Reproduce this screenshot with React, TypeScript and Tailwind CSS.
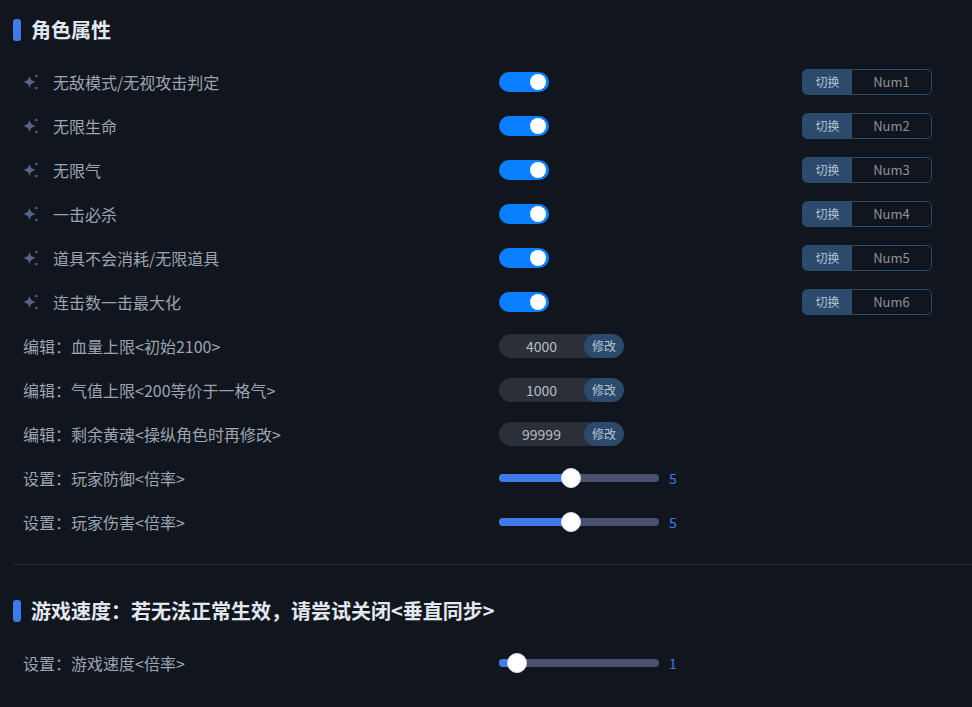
const font = { fontFamily: '"Noto Sans CJK SC", "Liberation Sans", sans-serif' };

const toggles = [
  { label: "无敌模式/无视攻击判定", key: "Num1" },
  { label: "无限生命", key: "Num2" },
  { label: "无限气", key: "Num3" },
  { label: "一击必杀", key: "Num4" },
  { label: "道具不会消耗/无限道具", key: "Num5" },
  { label: "连击数一击最大化", key: "Num6" },
];

const edits = [
  { label: "编辑：血量上限<初始2100>", value: "4000" },
  { label: "编辑：气值上限<200等价于一格气>", value: "1000" },
  { label: "编辑：剩余黄魂<操纵角色时再修改>", value: "99999" },
];

function Sparkle() {
  return (
    <svg width="18" height="18" viewBox="0 0 18 18" className="shrink-0">
      <path d="M7.5 2.6 C8 6.2 9.6 8 13.6 9 C9.6 10 8 11.8 7.5 15.4 C7 11.8 5.4 10 1.4 9 C5.4 8 7 6.2 7.5 2.6 Z" fill="#56648c" />
      <path d="M14.4 0.8 C14.6 2.2 15.2 2.8 16.6 3 C15.2 3.2 14.6 3.8 14.4 5.2 C14.2 3.8 13.6 3.2 12.2 3 C13.6 2.8 14.2 2.2 14.4 0.8 Z" fill="#56648c" />
      <path d="M14.4 12.8 C14.6 14.2 15.2 14.8 16.6 15 C15.2 15.2 14.6 15.8 14.4 17.2 C14.2 15.8 13.6 15.2 12.2 15 C13.6 14.8 14.2 14.2 14.4 12.8 Z" fill="#56648c" />
    </svg>
  );
}

function Heading({ text }: { text: string }) {
  return (
    <div className="flex h-[22px] items-center gap-[10px]">
      <span className="h-[22px] w-2 rounded-[3px] bg-[#3f7ae8]" />
      <h2 className="text-[20px] leading-[22px] font-bold text-[#e3e8f0]">{text}</h2>
    </div>
  );
}

function Slider({ label, value, percent }: { label: string; value: string; percent: number }) {
  return (
    <div className="flex h-11 items-center pl-[10px]">
      <span className="w-[476px] text-[16px] text-[#9ba4b0]">{label}</span>
      <div className="relative h-2 w-40 rounded-full bg-[#4b5070]">
        <div className="h-2 rounded-full bg-[#3f7ae8]" style={{ width: `${percent}%` }} />
        <span
          className="absolute top-1/2 h-5 w-5 -translate-x-1/2 -translate-y-1/2 rounded-full border border-[#dbe5ec] bg-white"
          style={{ left: `${percent}%` }}
        />
      </div>
      <span className="ml-[10px] text-[14px] text-[#3f7ae8]">{value}</span>
    </div>
  );
}

export default function App() {
  return (
    <div className="h-[707px] w-[972px] overflow-hidden bg-[#11161e] pt-[19px] pl-[13px]" style={font}>
      <Heading text="角色属性" />

      <div className="mt-[19px]">
        {toggles.map((item) => (
          <div key={item.key} className="flex h-11 items-center pl-[9px]">
            <Sparkle />
            <span className="ml-[13px] w-[446px] text-[16px] text-[#9ba4b0]">{item.label}</span>
            <div className="relative h-5 w-[50px] rounded-full bg-[#0a7fff]">
              <span className="absolute top-[2px] right-[3px] h-4 w-4 rounded-full bg-white" />
            </div>
            <div className="ml-[253px] flex h-[26px] w-[130px] overflow-hidden rounded-[5px] border border-[#2c4a6b]">
              <span className="flex w-[49px] items-center justify-center bg-[#2c4a6b] text-[12px] text-[#b4c2d2]">切换</span>
              <span className="flex flex-1 items-center justify-center text-[13px] text-[#8b919a]">{item.key}</span>
            </div>
          </div>
        ))}

        {edits.map((item) => (
          <div key={item.value} className="flex h-11 items-center pl-[10px]">
            <span className="w-[476px] text-[16px] text-[#9ba4b0]">{item.label}</span>
            <div className="flex h-6 w-[125px] overflow-hidden rounded-full bg-[#2b3038]">
              <span className="flex w-[85px] items-center justify-center text-[14px] text-[#b9bdc3]">{item.value}</span>
              <span className="flex flex-1 items-center justify-center rounded-full bg-[#2c4a6b] text-[12px] text-[#b4c2d2]">修改</span>
            </div>
          </div>
        ))}

        <Slider label="设置：玩家防御<倍率>" value="5" percent={45} />
        <Slider label="设置：玩家伤害<倍率>" value="5" percent={45} />
      </div>

      <div className="mt-[20px] h-px bg-[#232830]" />

      <div className="mt-[35px]">
        <Heading text="游戏速度：若无法正常生效，请尝试关闭<垂直同步>" />
      </div>

      <div className="mt-[19px]">
        <Slider label="设置：游戏速度<倍率>" value="1" percent={11} />
      </div>
    </div>
  );
}
